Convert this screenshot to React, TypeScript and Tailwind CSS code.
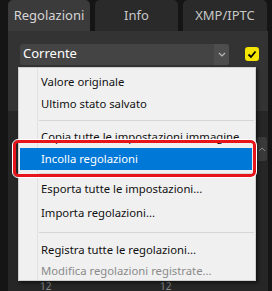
import React from "react";

const font = { fontFamily: '"Noto Sans", "Open Sans", sans-serif' };

function Item({ label, disabled = false, h = "h-[22px]" }: { label: string; disabled?: boolean; h?: string }) {
  return (
    <div className={`flex items-center ${h} pl-[22px] text-[11.3px] leading-none ${disabled ? "text-[#8a8a8a]" : "text-[#111]"}`}>
      {label}
    </div>
  );
}

function Sep({ h }: { h: string }) {
  return (
    <div className={`flex items-center ${h} pl-[20px] pr-[1px]`}>
      <div className="h-px w-full bg-[#d7d7d7]" />
    </div>
  );
}

export default function App() {
  return (
    <div className="relative w-[272px] h-[291px] overflow-hidden bg-[#151515]" style={font}>
      {/* tabs */}
      <div className="flex h-[31px] pl-[8px] gap-[5px]">
        <div className="w-[82px] h-[31px] rounded-t-[5px] bg-[#3b3b3b] flex items-center justify-center text-[13px] text-[#d6d6d6]">
          Regolazioni
        </div>
        <div className="w-[83px] h-[31px] rounded-t-[5px] bg-[#2a2a2a] flex items-center justify-center text-[13px] text-[#c8c8c8]">
          Info
        </div>
        <div className="w-[84px] h-[31px] rounded-t-[5px] bg-[#2a2a2a] flex items-center justify-center text-[13px] text-[#c8c8c8]">
          XMP/IPTC
        </div>
      </div>
      {/* panel */}
      <div className="ml-[8px] w-[260px] h-[260px] bg-[#333333] flex flex-col">
        <div className="flex items-center h-[46px] pl-[12px]">
          <div className="flex w-[209px] h-[21px] rounded-[3px] bg-[#444444] overflow-hidden">
            <div className="flex-1 flex items-center pl-[3px] text-[13px] text-white">Corrente</div>
            <div className="w-[15px] bg-[#4d4d4d] flex items-center justify-center">
              <svg width="8" height="5" viewBox="0 0 8 5">
                <path d="M1 1 L4 4 L7 1" stroke="#b8b8b8" strokeWidth="1.2" fill="none" />
              </svg>
            </div>
          </div>
          <div className="ml-[16px] w-[14px] h-[14px] rounded-[3px] bg-[#f4e600] flex items-center justify-center">
            <svg width="10" height="9" viewBox="0 0 10 9">
              <path d="M1.5 4.5 L4 7 L8.5 1.5" stroke="#000" strokeWidth="1.8" fill="none" />
            </svg>
          </div>
        </div>
        <div className="flex-1 bg-[#262626] mt-[34px] flex justify-end pt-[26px] pr-[1px]">
          <div className="w-[11px] h-[24px] rounded-[3px] bg-[#3a3a3a] flex items-center justify-center">
            <svg width="8" height="5" viewBox="0 0 8 5">
              <path d="M1 4 L4 1 L7 4" stroke="#888" strokeWidth="1" fill="none" />
            </svg>
          </div>
        </div>
      </div>
      <div className="absolute left-[40px] top-[281px] text-[10px] leading-none text-[#8a8a8a]">12</div>
      <div className="absolute left-[160px] top-[281px] text-[10px] leading-none text-[#8a8a8a]">12</div>

      {/* menu */}
      <div className="absolute left-[18px] top-[67px] w-[238px] h-[214px] bg-[#f0f0f0] border border-[#cfcfcf] shadow-[2px_2px_3px_rgba(0,0,0,0.5)] pt-[3px]">
        <div className="absolute left-[18px] top-0 bottom-0 w-px bg-[#e2e2e2]" />
        <div className="relative">
          <Item label="Valore originale" />
          <Item label="Ultimo stato salvato" />
          <Sep h="h-[11px]" />
          <Item label="Copia tutte le impostazioni immagine" />
          <div className="flex items-center h-[22px] pl-[1px] pr-[3px]">
            <div className="h-full w-full bg-[#0078d7] flex items-center pl-[21px] text-[11.3px] text-white leading-none">
              Incolla regolazioni
            </div>
          </div>
          <Sep h="h-[7px]" />
          <Item label="Esporta tutte le impostazioni..." h="h-[24px]" />
          <Item label="Importa regolazioni..." h="h-[24px]" />
          <Sep h="h-[14px]" />
          <Item label="Registra tutte le regolazioni..." />
          <Item label="Modifica regolazioni registrate..." disabled h="h-[20px]" />
        </div>
      </div>
      {/* red highlight */}
      <div className="absolute left-[13px] top-[140px] w-[243px] h-[37px] rounded-[5px] border-[3px] border-[#e8141c] outline outline-1 outline-white" />
    </div>
  );
}
